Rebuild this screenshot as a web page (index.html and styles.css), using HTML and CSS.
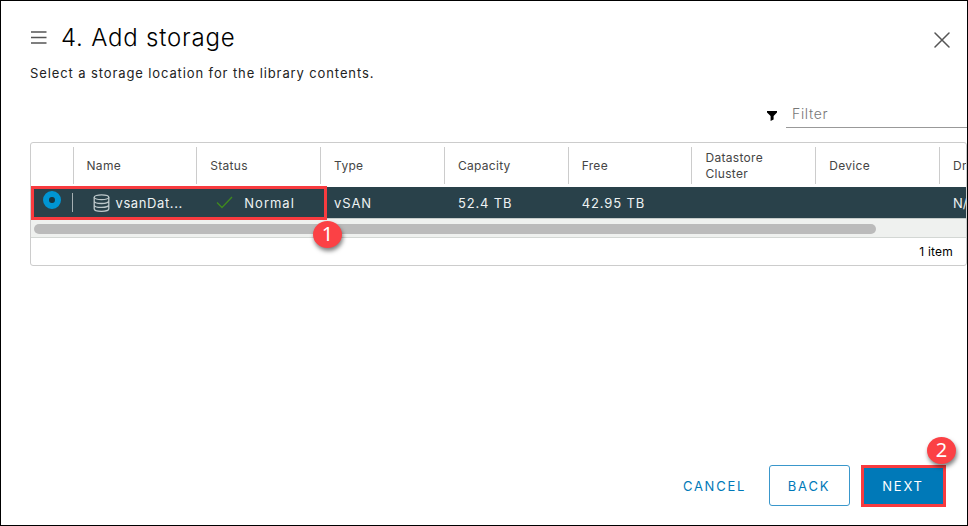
FILE: index.html
```html
<!DOCTYPE html>
<html lang="en">
<head>
<meta charset="utf-8">
<title>Add storage</title>
<link rel="stylesheet" href="styles.css">
</head>
<body>
<main class="wizard">
  <header class="head">
    <svg class="menu" width="16" height="13" viewBox="0 0 16 13"><path d="M0 1h15.5M0 6.5h15.5M0 12h15.5" stroke="#555" stroke-width="1.4"/></svg>
    <h1><span>4. Add storage</span></h1>
    <svg class="close" width="16" height="16" viewBox="0 0 16 16"><path d="M1 1l14 14M15 1L1 15" stroke="#555" stroke-width="1.5" stroke-linecap="round"/></svg>
  </header>
  <p class="intro"><span>Select a storage location for the library contents.</span></p>
  <div class="filter">
    <svg width="10" height="10" viewBox="0 0 10 10"><path d="M0 0h10v1.5L6.6 5v3.4L3.6 10V5L0 1.5z" fill="#000"/></svg>
    <div class="field"><span>Filter</span></div>
  </div>
  <section class="grid">
    <div class="row header">
      <div class="pick"></div>
      <div class="cell"><span>Name</span></div>
      <div class="cell"><span>Status</span></div>
      <div class="cell"><span>Type</span></div>
      <div class="cell"><span>Capacity</span></div>
      <div class="cell"><span>Free</span></div>
      <div class="cell"><span>Datastore<br>Cluster</span></div>
      <div class="cell"><span>Device</span></div>
      <div class="cell"><span>Dr</span></div>
    </div>
    <div class="row selected">
      <div class="pick"><i class="radio"></i><i class="divider"></i></div>
      <div class="cell">
        <svg class="db" width="17" height="18" viewBox="0 0 17 18" fill="none" stroke="#bdc8cb" stroke-width="1.3"><ellipse cx="8.5" cy="3.2" rx="7.3" ry="2.4"/><path d="M1.2 3.2v11.5c0 1.5 3.3 2.6 7.3 2.6s7.3-1.1 7.3-2.6V3.2M1.2 7c0 1.5 3.3 2.5 7.3 2.5s7.3-1 7.3-2.5M1.2 10.9c0 1.5 3.3 2.5 7.3 2.5s7.3-1 7.3-2.5"/></svg>
        <span>vsanDat...</span>
      </div>
      <div class="cell">
        <svg class="check" width="17" height="13" viewBox="0 0 17 13"><path d="M1 6.5l5 5L16 1" fill="none" stroke="#3f8a1e" stroke-width="1.3"/></svg>
        <span class="normal">Normal</span>
      </div>
      <div class="cell"><span>vSAN</span></div>
      <div class="cell"><span>52.4 TB</span></div>
      <div class="cell"><span>42.95 TB</span></div>
      <div class="cell"></div>
      <div class="cell"></div>
      <div class="cell last"><span>N/A</span></div>
    </div>
    <div class="scroll"><div class="thumb"></div></div>
    <div class="foot"><span>1 item</span></div>
    <div class="mark"><b class="badge">1</b></div>
  </section>
  <footer class="actions">
    <button class="btn cancel"><span>CANCEL</span></button>
    <button class="btn back"><span>BACK</span></button>
    <button class="btn next"><span>NEXT</span><b class="badge">2</b></button>
  </footer>
</main>
</body>
</html>
```
FILE: styles.css
```css
* { box-sizing: border-box; }
body { margin: 0; background: #fff; font-family: Inter, "Liberation Sans", sans-serif; font-size: 13px; color: #222; }
svg { display: block; flex: none; }
span { white-space: nowrap; }
.wizard { width: 968px; height: 526px; border: 1px solid #000; padding-left: 29px; display: flex; flex-direction: column; overflow: hidden; }
.head { display: flex; align-items: center; height: 32px; margin-top: 20px; padding-right: 17px; flex: none; }
.menu { margin-left: 1px; }
h1 { margin: 1px 0 0 14px; font-size: 24px; line-height: 32px; font-weight: 300; color: #000; letter-spacing: 0.8px; }
.close { margin: 6px 0 0 auto; }
.intro { margin: 10px 0 0; line-height: 20px; letter-spacing: 0.89px; }
.filter { display: flex; height: 27px; margin: 18px 0 0 737px; flex: none; align-items: center; }
.filter svg { margin-top: 2px; }
.field { flex: 1; height: 27px; margin-left: 9px; padding-left: 6px; line-height: 25px; border-bottom: 1px solid #999; font-size: 14px; font-weight: 300; color: #777; letter-spacing: 0.65px; }
.grid { position: relative; width: 937px; height: 124px; margin-top: 14px; border: 1px solid #ccc; border-radius: 3px; flex: none; }
.row { display: grid; grid-template-columns: 41.5px repeat(8, 123.8px); overflow: hidden; }
.header { height: 44px; padding-top: 4px; font-size: 12px; line-height: 16px; color: #454545; letter-spacing: 0.3px; }
.header .cell { height: 37px; border-left: 1px solid #ccc; padding-left: 13px; }
.cell { display: flex; align-items: center; }
.selected { height: 32px; background: #29414a; color: #eef2f3; letter-spacing: 0.85px; border-bottom: 1px solid #c5ccca; }
.selected .cell { padding-left: 14px; }
.selected .cell:nth-child(2) { letter-spacing: 0.6px; }
.selected .last { letter-spacing: 0; }
.normal { letter-spacing: 1px; }
.pick { display: flex; align-items: center; }
.radio { width: 18px; height: 18px; margin: -6px 0 0 12px; border: 6px solid #0095d3; border-radius: 50%; background: #17343f; }
.divider { width: 1px; height: 19px; margin-left: 11px; background: #a6b0b3; }
.db { margin: 0 6px; }
.check { margin: 0 11px 0 6px; }
.scroll { height: 19px; padding: 5px 0 0 3px; background: #eff1ef; border-bottom: 1px solid #d3d7d4; }
.thumb { width: 842px; height: 10px; border-radius: 5px; background: #bbb; }
.foot { padding-right: 13px; line-height: 28px; text-align: right; font-size: 12px; color: #000; letter-spacing: 0.2px; }
.mark { position: absolute; left: 0; top: 43px; width: 296px; height: 34px; border: 3px solid #f83b3f; }
.badge { position: absolute; width: 29px; height: 27px; border-radius: 50%; background: #fb4145; color: #fff; font: 20px/26px "Noto Sans", sans-serif; letter-spacing: 0; text-align: center; box-shadow: 1px 3px 4px rgba(0,0,0,.5); }
.mark .badge { left: 279px; top: 32px; }
.actions { display: flex; margin: auto 21px 18px auto; height: 42px; align-items: flex-start; }
.btn { position: relative; height: 41px; padding: 0 1px 0 0; border: 0; border-radius: 3px; background: #fff; color: #0079b8; font: 13px/20px Inter, sans-serif; letter-spacing: 1.75px; }
.cancel { width: 66px; margin-right: 21px; }
.back { width: 81px; margin-right: 11px; border: 1px solid #3a97cb; }
.next { width: 85px; height: 42px; border: 3px solid #f83b3f; border-radius: 0; background: #0079b8; color: #fff; }
.next .badge { left: 63px; top: -31px; }
```
